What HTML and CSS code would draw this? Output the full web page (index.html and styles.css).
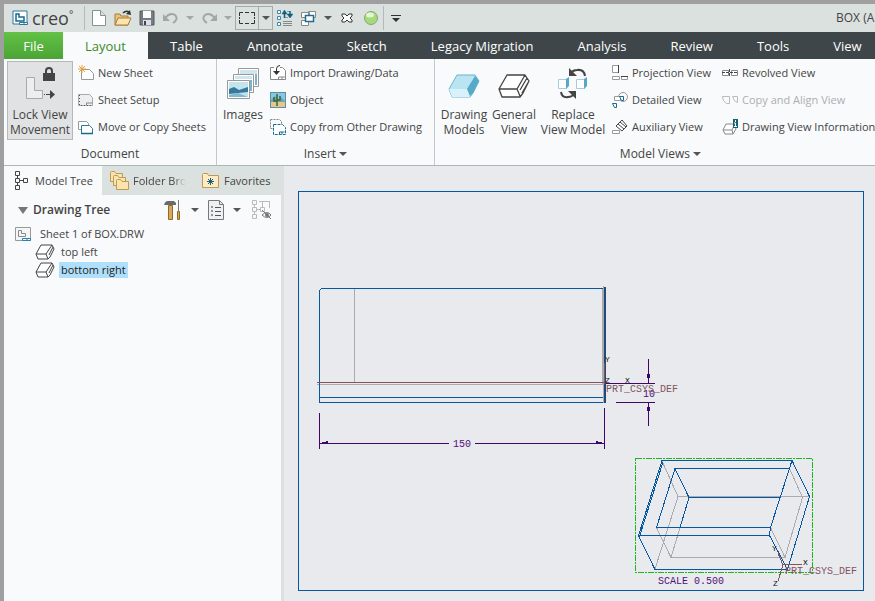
FILE: index.html
```html
<!DOCTYPE html>
<html lang="en">
<head>
    <meta charset="UTF-8">
    <meta name="viewport" content="width=device-width, initial-scale=1.0">
    <title>BOX - Creo</title>
    <link rel="stylesheet" href="styles.css">
</head>
<body>
<div class="app">
    <!-- shared symbols -->
    <svg class="defs" aria-hidden="true">
        <symbol id="box" viewBox="0 0 32 24">
            <path d="M1 15 9 1h18l4 6-6 12-3 4H4zM1 15h18l3 7M19 15l8-14M22 16l7-12M24 19l7-12" fill="#fff" stroke="#444" stroke-width="1.300" stroke-linejoin="round"/>
        </symbol>
        <symbol id="smallbox" viewBox="0 0 20 16">
            <path d="M1 10 6 1h11l2 4-4 8-2 2H3zM1 10h10l2 5M11 10l6-9M14 11l4-8" fill="#fff" stroke="#444" stroke-linejoin="round"/>
        </symbol>
        <symbol id="folder" viewBox="0 0 13 11">
            <path d="M.5 10.500v-9q0-1 1-1h3l1.500 2h6.500v8z" fill="#fbe3ae" stroke="#c09a55"/>
        </symbol>
    </svg>

    <header class="titlebar">
        <svg class="logo-icon" width="16" height="16" viewBox="0 0 16 16"><path d="M1 1h14v13h-14z" fill="#fff" stroke="#28789b"/><path d="M4 4h3v3h5v4H4z" fill="none" stroke="#176b8f" stroke-width="1.500"/><path d="M7.500 12.500h8v2h-8zM12 12v3" fill="#fff" stroke="#28789b"/></svg>
        <span class="logo">creo<sup>°</sup></span>
        <div class="quick">
            <button aria-label="New"><svg width="14" height="16" viewBox="0 0 14 16"><path d="M.5.5h8l5 5v10H.5z" fill="#fff" stroke="#8a9090"/><path d="M8.500.5v5h5" fill="#ddd" stroke="#8a9090"/></svg></button>
            <button aria-label="Open"><svg width="18" height="16" viewBox="0 0 18 16"><path d="M1 15V4h5l1 2h7v9z" fill="#e9c37d" stroke="#a67c3a"/><path d="M1 15 4 8h13l-3 7z" fill="#fce4ac" stroke="#a67c3a"/><path d="M9 3q3-3 6-1" fill="none" stroke="#333" stroke-width="1.500"/><path d="m16 0 1 5-5-1z" fill="#333"/></svg></button>
            <button aria-label="Save"><svg width="16" height="16" viewBox="0 0 16 16"><path d="M1 1h14v14H1z" fill="#777d83" stroke="#555b60"/><path d="M4 1h8v7H4z" fill="#fff"/><path d="M4 10h8v5H4z" fill="#dde"/><path d="M5 11h2v4H5z" fill="#444"/></svg></button>
            <button aria-label="Undo"><svg width="16" height="12" viewBox="0 0 16 12"><path d="M2 6q5-6 10-3 4 4-2 8" fill="none" stroke="#a2a7a8" stroke-width="2"/><path d="M0 2v7h7z" fill="#a2a7a8"/></svg></button>
            <button class="drop off" aria-label="Undo list"></button>
            <button aria-label="Redo"><svg width="16" height="12" viewBox="0 0 16 12"><path d="M14 6Q9 0 4 3q-4 4 2 8" fill="none" stroke="#a2a7a8" stroke-width="2"/><path d="M16 2v7H9z" fill="#a2a7a8"/></svg></button>
            <button class="drop off" aria-label="Redo list"></button>
            <button class="framed" aria-label="Select"><svg width="16" height="12" viewBox="0 0 16 12"><path d="M.5 4V.5H4M6 .5h4M12 .5h3.500V4M15.500 5v2M15.500 8v3.500H12M10 11.500H6M4 11.500H.5V8M.5 5v2" fill="none" stroke="#333"/></svg></button>
            <button class="drop framed" aria-label="Select list"></button>
            <button aria-label="Regenerate"><svg width="16" height="16" viewBox="0 0 16 16"><path d="M.5.5h3v3h-3zM.5 6.500h3v3h-3zM.5 12.500h3v3h-3z" fill="#fff" stroke="#3d88a8"/><path d="M6 11.500h9M6 13.500h9M6 15.500h9" stroke="#888"/><path d="M7.500 8V3M13 1v4" stroke="#135f80" stroke-width="1.500"/><path d="m5 4 2.500-4L10 4zM10 4h6l-3 4zM7 7.500h4M10 1.500h3" fill="#135f80" stroke="#135f80" stroke-width=".5"/></svg></button>
            <button aria-label="Windows"><svg width="16" height="15" viewBox="0 0 16 15"><path d="M7.500.5h7v6h-7zM.5 1.500h8v5h-8zM.5 9.500h7v5h-7z" fill="#fff" stroke="#888"/><path d="M4.500 4.500h8v6h-8z" fill="#fff" stroke="#206f90" stroke-width="1.500"/></svg></button>
            <button class="drop" aria-label="Window list"></button>
            <button aria-label="Close"><svg width="12" height="10" viewBox="0 0 12 10"><path d="M1 1h3l2 2 2-2h3v2L9 5l2 2v2H8L6 7 4 9H1V7l2-2-2-2z" fill="#fff" stroke="#333"/></svg></button>
            <button aria-label="Status"><svg width="14" height="14" viewBox="0 0 14 14"><circle cx="7" cy="7" r="6.500" fill="#a5db79" stroke="#8aa37b"/><ellipse cx="6" cy="4" rx="4" ry="2.500" fill="#e3f6d2"/></svg></button>
            <button class="more" aria-label="Customize"><svg width="10" height="7" viewBox="0 0 10 7"><path d="M0 0h10v1H0zM1 3h8L5 7z" fill="#333"/></svg></button>
        </div>
        <span class="title">BOX (A</span>
    </header>

    <nav class="tabs">
        <a class="file" href="#">File</a>
        <a class="active" href="#">Layout</a>
        <a href="#">Table</a>
        <a href="#">Annotate</a>
        <a href="#">Sketch</a>
        <a href="#">Legacy Migration</a>
        <a href="#">Analysis</a>
        <a href="#">Review</a>
        <a href="#">Tools</a>
        <a href="#">View</a>
    </nav>

    <div class="ribbon">
        <section class="group document">
            <div class="tools">
                <button class="big pressed"><svg width="32" height="34" viewBox="0 0 32 34"><path d="M2.500 10.500h8v13h8v8h-16z" fill="#eee" stroke="#aaa"/><path d="M19 6h12v8H19z" fill="#444"/><path d="M22 6V4q0-3 3-3t3 3v2" fill="none" stroke="#444" stroke-width="2"/><path d="M20 27.500h1M22 27.500h6" stroke="#444"/><path d="m26 23 5 4.500-5 4.500z" fill="#444"/></svg>Lock View<br>Movement</button>
                <div class="list">
                    <button><svg width="16" height="16" viewBox="0 0 16 16"><path d="M3.500 4.500h8l4 4v6h-12z" fill="#fff" stroke="#999"/><path d="M4 0v8M0 4h8M1 1l6 6M7 1 1 7" stroke="#e9a13a"/></svg>New Sheet</button>
                    <button><svg width="16" height="16" viewBox="0 0 16 16"><path d="M.5 2.500h11l3 3v8h-14z" fill="#eee" stroke="#aaa"/><path d="M1.500 3v10M3 13.500h12" stroke="#555" stroke-dasharray="1 2"/><path d="M8.500 13v-2h6" fill="none" stroke="#888"/></svg>Sheet Setup</button>
                    <button><svg width="16" height="16" viewBox="0 0 16 16"><path d="M.5 2.500h8l2 2v6H.5z" fill="#fff" stroke="#999"/><path d="M3.500 6.500h8l3 3v5h-11z" fill="#fff" stroke="#28789b"/><path d="M3 14.500h12" stroke="#176b8f" stroke-width="1.500"/></svg>Move or Copy Sheets</button>
                </div>
            </div>
            <h2>Document</h2>
        </section>
        <section class="group insert">
            <div class="tools">
                <button class="big images"><svg width="32" height="34" viewBox="0 0 32 34"><g fill="#fff" stroke="#999"><path d="M11.500 1.500h20v18h-20z"/><path d="M6.500 7.500h20v18h-20z"/><path d="M.5 13.500h22v18H.5z"/></g><path d="M13 3h17v4H13zM8 9h17v3H8z" fill="#cfe6ee"/><path d="M28 7h2v11h-2zM23 13h2v11h-2z" fill="#7eb3c9"/><path d="M2 15h19v15H2z" fill="#c3e3ee"/><path d="m2 22 5-2 5 3 9-3v5l-10 1-9 1z" fill="#35799b"/><path d="m2 28 9-2 10 4H2z" fill="#83b8cd"/></svg>Images</button>
                <div class="list">
                    <button><svg width="16" height="16" viewBox="0 0 16 16"><path d="M4 2.500H.5v12h15v-9l-3-3H10" fill="#fff" stroke="#888"/><path d="M8.500 14v-2h7M12 12v2" fill="none" stroke="#888"/><path d="M10 .5Q6.500.5 6.500 4v5" fill="none" stroke="#333"/><path d="M3 6h7l-3.500 4z" fill="#333"/></svg>Import Drawing/Data</button>
                    <button><svg width="16" height="16" viewBox="0 0 16 16"><path d="M0 0h16v16H0z" fill="#5c8ea6"/><path d="M1 1h14v8H1z" fill="#88c7e4"/><path d="m1 8 4-4 4 4 2-3 4 4v6H1z" fill="#6ba4bc"/><path d="M1 10h14v5H1z" fill="#e7c58b"/><path d="M7 2v12M4 5v4h3M10 4v4H7" fill="none" stroke="#386a31" stroke-width="1.500"/></svg>Object</button>
                    <button><svg width="16" height="16" viewBox="0 0 16 16"><path d="M.5.5h9l2 2V5M.5.5v9H3" fill="none" stroke="#888" stroke-dasharray="2 1"/><path d="M3.500 5.500h9l3 3v7h-12z" fill="#fff" stroke="#176b8f" stroke-dasharray="3 1"/><path d="M9.500 15v-2h5M12 13v2" fill="none" stroke="#176b8f"/></svg>Copy from Other Drawing</button>
                </div>
            </div>
            <h2>Insert <i class="caret"></i></h2>
        </section>
        <section class="group views">
            <div class="tools">
                <button class="big"><svg width="32" height="34" viewBox="0 -7 32 34"><path d="M1 15 9 1h18l4 6-6 12-3 4H4z" fill="#b9e5f3" stroke="#6db3cd"/><path d="M1 15h18l3 8H4z" fill="#d7f2fa"/><path d="m19 15 8-13 4 5-6 12-3 3z" fill="#56a9c8"/></svg>Drawing<br>Models</button>
                <button class="big"><svg width="32" height="34" viewBox="0 -7 32 34"><use href="#box" width="32" height="24"/></svg>General<br>View</button>
                <button class="big wide"><svg width="32" height="34" viewBox="0 0 32 34"><path d="M1.500 12.500h8v9h-8zM19.500 12.500h8v9h-8z" fill="#fff" stroke="#a7cddd"/><path d="m9 12 3-2v9l-3 3zM27 12l3-2v9l-3 3z" fill="#55a8c7"/><path d="M28 9q-1-7-8-6-4 0-6 3M4 25q1 6 7 5 4 0 6-3" fill="none" stroke="#444" stroke-width="2"/><path d="M12 1v8h8zM19 32v-8h-8z" fill="#444"/></svg>Replace<br>View Model</button>
                <div class="list first">
                    <button><svg width="16" height="16" viewBox="0 0 16 16"><path d="M.5.5h6v7h-6zM.5 11.500h7v3h-7zM9.500 11.500h6v3h-6z" fill="#fff" stroke="#999"/><path d="M6.500 0v8M9 11.500h7" stroke="#444"/></svg>Projection View</button>
                    <button><svg width="16" height="16" viewBox="0 0 16 16"><circle cx="11" cy="5" r="4.500" fill="none" stroke="#999"/><path d="M2.500 4.500h6v4h-6z" fill="#fff" stroke="#999"/><path d="M7.500 4.500h4v4h-2zM.5 11.500h4v4h-2z" fill="#fff" stroke="#176b8f"/></svg>Detailed View</button>
                    <button><svg width="16" height="16" viewBox="0 0 16 16"><path d="m4 7 6-6 5 6-5 5zM6 5l6 5M8 3l6 5" fill="#fff" stroke="#444"/><path d="M.5 11.500h7v3h-7z" fill="#fff" stroke="#999"/></svg>Auxiliary View</button>
                </div>
                <div class="list">
                    <button><svg width="16" height="16" viewBox="0 0 16 16"><path d="M.5 5.500h6v5h-6zM9.500 5.500h6v5h-6z" fill="#fff" stroke="#888"/><path d="M7.500 4v8M0 7.500h16" stroke="#444" stroke-dasharray="3 1"/></svg>Revolved View</button>
                    <button disabled><svg width="16" height="16" viewBox="0 0 16 16"><path d="M.5 4.500h7v7h-3q-4-2-4-7zM10.500 4.500h5v6q-4-1-5-6z" fill="none" stroke="#bbb"/></svg>Copy and Align View</button>
                    <button><svg width="16" height="18" viewBox="0 0 16 18"><path d="m1 12 3-6h8l2 5-3 5H3zM1 12h9l1 4M10 12l3-6" fill="#fff" stroke="#888"/><path d="M11 1h5v9h-5z" fill="#176078"/><path d="M13.500 2v2M12 5h1.500v3M12 8.500h3" fill="none" stroke="#fff"/></svg>Drawing View Information</button>
                </div>
            </div>
            <h2>Model Views <i class="caret"></i></h2>
        </section>
    </div>

    <div class="work">
        <aside class="sidebar">
            <div class="side-tabs">
                <button class="on"><svg width="14" height="20" viewBox="0 0 14 20"><path d="M1.500.5h4v4h-4zM1.500 7.500h4v4h-4zM1.500 14.500h4v4h-4zM9.500 7.500h4v4h-4zM3.500 5v2M3.500 12v2M6 9.500h3" fill="none" stroke="#444"/></svg>Model Tree</button>
                <button class="browser"><svg width="19" height="20" viewBox="0 0 19 20"><use href="#folder" width="13" height="11"/><use href="#folder" x="3" y="4" width="13" height="11"/><use href="#folder" x="6" y="8" width="13" height="11"/></svg><span>Folder Browser</span></button>
                <button class="fav"><svg width="17" height="15" viewBox="0 0 17 15"><path d="M.5 14.500v-13q0-1 1-1h4l1 2h10v12z" fill="#fdebc3" stroke="#c09a55"/><path d="M8.500 5v7M5 8.500h7M6 6l5 5M11 6l-5 5" stroke="#176078"/></svg>Favorites</button>
            </div>
            <div class="tree-head">
                <i class="caret large"></i><strong>Drawing Tree</strong>
                <button aria-label="Settings"><svg width="18" height="20" viewBox="0 0 18 20"><path d="M4.500 5.500h4v14h-4z" fill="#d8a85c" stroke="#96672b"/><path d="M0 5q1-4 4-4h6l2 2v2z" fill="#666b70"/><path d="M14.500 0v11" stroke="#777"/><path d="M13.500 11.500h2v8h-2z" fill="#dba64f" stroke="#96672b"/></svg></button>
                <button class="drop" aria-label="Settings list"></button>
                <button aria-label="Show"><svg width="16" height="20" viewBox="0 0 16 20"><path d="M.5.5h11l4 4v15H.5z" fill="#eef1f3" stroke="#777"/><path d="M11.500 1v3.500H15" fill="none" stroke="#777"/><path d="M3.500 6.500h1v1h-1zM3.500 10.500h1v1h-1zM3.500 14.500h1v1h-1z" fill="none" stroke="#777"/><path d="M7 7.500h6M7 11.500h6M7 15.500h6" stroke="#555"/></svg></button>
                <button class="drop" aria-label="Show list"></button>
                <button class="hide" aria-label="Hide items" disabled><svg width="20" height="20" viewBox="0 0 20 20"><path d="M.5.5h4v4h-4zM.5 7.500h4v4h-4zM.5 14.500h4v4h-4zM8.500 7.500h4v4h-4zM2.500 5v2M2.500 12v2M5 9.500h3M7 1.500h11M10.500 2v5M17.500 2v6" fill="none" stroke="#bbb"/><path d="M10 15q5-5 9 0-4 5-9 0zM10 10l9 9" fill="none" stroke="#777"/><circle cx="15" cy="15" r="2" fill="#777"/></svg></button>
            </div>
            <ul class="tree">
                <li class="root"><svg width="16" height="14" viewBox="0 0 16 14"><path d="M.5.5h15v13H.5z" fill="#f3f5f6" stroke="#999"/><path d="M3.500 3.500h3v3h4v3h-7z" fill="none" stroke="#888"/><path d="M7.500 11.500h8v2h-8zM12 11v2" fill="none" stroke="#2884ae"/></svg><span>Sheet 1 of BOX.DRW</span></li>
                <li><svg width="20" height="16"><use href="#smallbox" width="20" height="16"/></svg><span>top left</span></li>
                <li class="selected"><svg width="20" height="16"><use href="#smallbox" width="20" height="16"/></svg><span>bottom right</span></li>
            </ul>
        </aside>
        <main class="canvas">
            <svg class="drawing" width="591" height="435" viewBox="284 166 591 435">
                <path class="edge" d="M298.500 191.500h565v399h-565z"/>

                <!-- front view -->
                <path class="hidden" d="M354.500 289v94M602.500 289v95M317 384.500h289"/>
                <path class="edge" d="M604 288.500H321.500l-2 2v112H604M320 397.500h284"/>
                <path class="edge thick" d="M605 287v116"/>
                <path class="hidden" d="M603.500 286v117"/>
                <path class="csys" d="M317 382.500h289M604.500 363v21M606 383.500h14"/>

                <!-- dimensions -->
                <path class="dim" d="M319.500 413v36M604.500 408v41M320 443.500h129M475 443.500h129M606 383.500h49M616 402.500h39M648.500 359v24M648.500 403v23"/>
                <path class="tip" d="m320 443 8-2v3zM604 443l-8-2v3zM648.500 382l-2-8h4zM648.500 403l-2 8h4z"/>
                <text class="dimtext" x="453" y="447">150</text>
                <text class="dimtext" x="643" y="397">10</text>
                <text class="csystext" x="606" y="392">PRT_CSYS_DEF</text>
                <text class="axis" x="605" y="362">Y</text>
                <text class="axis" x="605" y="383">Z</text>
                <text class="axis" x="625" y="383">X</text>

                <!-- perspective view -->
                <path class="bounds" d="M635.500 458.500h177v114h-177z"/>
                <path class="hidden" d="M662 461l16 35.500h131.500M678 496.500 655 569M656.500 527.500l14.500 30h114l17.500-60-13-29M770.500 527.500l14.500 30M671 557.500l9-30"/>
                <path class="edge" d="M638.500 535.500 662 460.500h130l17.500 36L787.500 569.500H655zh131l18 34M663 462l-23 73M792 460.500l-21.500 67-1 8M675 468.500h114.500l-19 59h-114zl14 29h91M689 497.500l-9 30"/>
                <path class="csys" d="M783 565l-5-12M783 565l19-1M783 565l-5 16"/>
                <text class="csystext" x="785" y="574">PRT_CSYS_DEF</text>
                <text class="axis" x="772" y="551">Y</text>
                <text class="axis" x="803" y="565">X</text>
                <text class="axis" x="773" y="586">Z</text>
                <text class="dimtext" x="658" y="584">SCALE 0.500</text>
            </svg>
        </main>
    </div>
</div>
</body>
</html>
```

FILE: styles.css
```css
* {
    box-sizing: border-box;
}

body {
    margin: 0;
    font-family: "Open Sans", "Noto Sans", sans-serif;
    font-size: 12px;
    line-height: 16px;
    color: #444;
}

button {
    font: inherit;
    color: inherit;
    background: none;
    border: 0;
    padding: 0;
    white-space: nowrap;
}

svg {
    flex: none;
}

.defs {
    display: none;
}

.app {
    display: flex;
    flex-direction: column;
    height: 100vh;
    overflow: hidden;
    border-top: 4px solid #a09f9f;
    border-left: 4px solid #a09f9f;
    background: #f8fafb;
}

/* title bar */
.titlebar {
    display: flex;
    align-items: center;
    flex: none;
    height: 28px;
    padding-left: 8px;
    background: #dbe1df;
}

.logo {
    width: 52px;
    margin-left: 4px;
    font-size: 18px;
    line-height: 20px;
}

.logo sup {
    font-size: 10px;
    line-height: 8px;
}

.quick {
    display: flex;
    align-items: center;
    padding-left: 2px;
    border-left: 1px solid #b3b9b8;
}

.quick button {
    display: flex;
    align-items: center;
    justify-content: center;
    width: 24px;
    height: 24px;
}

.quick .drop {
    width: 14px;
}

.quick .framed {
    border: 1px solid #a5abaa;
}

.quick .drop.framed {
    border-left: 0;
}

.quick .more {
    border-left: 1px solid #b3b9b8;
}

.caret,
.drop::before {
    content: "";
    display: inline-block;
    border: 4px solid transparent;
    border-top-color: #555;
    border-bottom: 0;
}

.drop.off::before {
    border-top-color: #a2a7a8;
}

.title {
    flex: none;
    width: 39px;
    margin-left: auto;
    overflow: hidden;
    white-space: nowrap;
}

/* tabs */
.tabs {
    display: flex;
    flex: none;
    height: 27px;
    background: #3e4649;
}

.tabs a {
    flex: none;
    padding: 0 22px;
    color: #fff;
    font-size: 13px;
    line-height: 28px;
    text-decoration: none;
    white-space: nowrap;
}

.tabs .file {
    width: 59px;
    padding: 0;
    background: linear-gradient(#62c146, #4ba435);
    text-align: center;
}

.tabs .active {
    width: 85px;
    padding: 0;
    background: #f8fafb;
    color: #3c8a2a;
    text-align: center;
}

/* ribbon */
.ribbon {
    display: flex;
    flex: none;
    height: 107px;
    border-bottom: 1px solid #a9bab6;
}

.group {
    flex: none;
    padding: 0 4px;
    border-right: 1px solid #c3c9ca;
}

.document {
    width: 213px;
    padding: 0 3px;
}

.insert {
    width: 218px;
}

.views {
    width: 452px;
}

.group h2 {
    margin: 6px 0 0;
    font-size: 12px;
    line-height: 16px;
    font-weight: normal;
    text-align: center;
}

.group .caret {
    margin-bottom: 2px;
}

.tools {
    display: flex;
    height: 81px;
}

.big {
    display: flow-root;
    flex: none;
    width: 50px;
    height: 79px;
    margin-top: 2px;
    border: 1px solid transparent;
    line-height: 15px;
    text-align: center;
}

.big svg {
    display: block;
    margin: 2px auto 6px;
}

.big.pressed {
    width: 66px;
    border-color: #b5b8b9;
    background: #e0e2e3;
}

.big.wide {
    width: 68px;
}

.big.images {
    width: 44px;
    padding-bottom: 15px;
}

.list {
    flex: none;
    padding-left: 5px;
    font-size: 11px;
}

.list.first {
    width: 110px;
}

.list button {
    display: flex;
    align-items: center;
    gap: 4px;
    height: 27px;
}

.list button:disabled {
    color: #acafb0;
}

/* workspace */
.work {
    display: flex;
    flex: 1;
    min-height: 0;
}

.sidebar {
    flex: none;
    width: 280px;
    border-right: 3px solid #dbe1df;
    font-size: 11px;
}

.side-tabs {
    display: flex;
    height: 29px;
    background: #dbe1df;
}

.side-tabs button {
    display: flex;
    align-items: center;
    gap: 7px;
    padding-left: 10px;
}

.side-tabs .on {
    width: 98px;
    background: #f8fafb;
}

.side-tabs .browser {
    gap: 4px;
    width: 84px;
    padding-left: 8px;
    overflow: hidden;
}

.browser span {
    overflow: hidden;
    mask-image: linear-gradient(90deg, #000 75%, transparent);
}

.side-tabs .fav {
    gap: 5px;
    padding-left: 16px;
}

.tree-head {
    display: flex;
    align-items: center;
    height: 30px;
    padding-left: 14px;
}

.tree-head .caret {
    margin-right: 5px;
    border-width: 7px 5px 0;
    border-top-color: #777;
}

.tree-head strong {
    width: 131px;
    font-size: 12px;
    font-weight: 600;
}

.tree-head button {
    display: flex;
    justify-content: center;
}

.tree-head .drop {
    width: 26px;
}

.tree-head .hide {
    margin-left: 2px;
}

.tree {
    margin: 0;
    padding: 0;
    list-style: none;
}

.tree li {
    display: flex;
    align-items: center;
    height: 18px;
    padding-left: 31px;
}

.tree .root {
    gap: 7px;
    padding-left: 11px;
}

.tree li span {
    padding: 0 2px;
    white-space: nowrap;
}

.tree li:not(.root) {
    gap: 4px;
}

.tree .selected span {
    background: #b0dffc;
    color: #222;
}

.canvas {
    flex: 1;
    min-width: 0;
    overflow: hidden;
    background: #e8eaed;
}

/* drawing */
.drawing {
    display: block;
}

.drawing path {
    fill: none;
    shape-rendering: crispEdges;
}

.drawing .edge {
    stroke: #0558a0;
}

.drawing .thick {
    stroke: #234a78;
    stroke-width: 2px;
}

.drawing .hidden {
    stroke: #a9abae;
}

.drawing .dim {
    stroke: #40066b;
}

.drawing .tip {
    fill: #40066b;
}

.drawing .csys {
    stroke: #81545d;
}

.drawing .bounds {
    stroke: #1db51d;
    stroke-dasharray: 6 1 2 1;
}

.drawing text {
    font-family: "Liberation Mono", monospace;
    font-size: 10px;
}

.drawing .dimtext {
    fill: #50107c;
}

.drawing .csystext {
    fill: #81545d;
}

.drawing .axis {
    font-size: 8px;
    fill: #111;
}
```
